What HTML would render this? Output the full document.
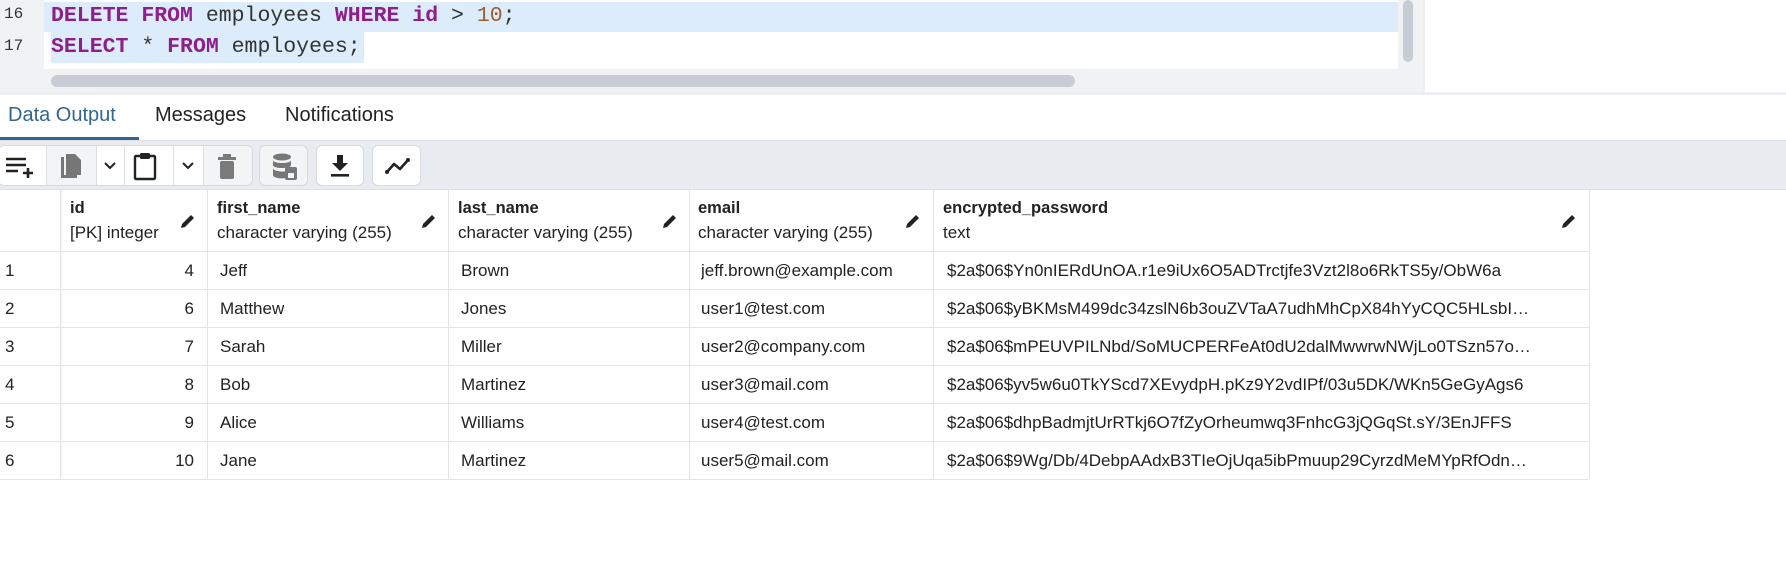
<!DOCTYPE html>
<html><head><meta charset="utf-8"><style>
*{margin:0;padding:0;box-sizing:border-box}
body{width:1786px;height:588px;background:#fff;font-family:"Liberation Sans",sans-serif;position:relative;overflow:hidden;color:#222}
.abs{position:absolute}
.code{font-family:"Liberation Mono",monospace;font-size:21.5px;color:#333;white-space:pre}
.kw{color:#8c1f8c;font-weight:bold}.num{color:#9a5f34}
.tab{position:absolute;top:104px;font-size:20px;color:#222}
.btn{position:absolute;top:145px;height:41px;border:1px solid #d6d9df;border-radius:6px;background:#fff}
.cell{position:absolute;font-size:17px;color:#222;white-space:nowrap;overflow:hidden}
.hl{position:absolute;background:#e1e4e9;height:1px}
.vl{position:absolute;background:#e1e4e9;width:1px}
</style></head><body>
<div class="abs" style="left:0;top:0;width:44px;height:92px;background:#f1f2f4"></div>
<div class="abs" style="left:4px;top:5px;font-family:'Liberation Mono',monospace;font-size:16px;color:#333">16</div>
<div class="abs" style="left:4px;top:37px;font-family:'Liberation Mono',monospace;font-size:16px;color:#333">17</div>
<div class="abs" style="left:44px;top:2px;width:1354px;height:30px;background:#dcecfa"></div>
<div class="abs" style="left:51px;top:32px;width:313px;height:31px;background:#dcecfa"></div>
<div class="abs code" style="left:51px;top:4px"><span class="kw">DELETE FROM</span> employees <span class="kw">WHERE id</span> &gt; <span class="num">10</span>;</div>
<div class="abs code" style="left:51px;top:35px"><span class="kw">SELECT</span> * <span class="kw">FROM</span> employees;</div>
<div class="abs" style="left:44px;top:69px;width:1354px;height:23px;background:#f1f2f4"></div>
<div class="abs" style="left:51px;top:75px;width:1024px;height:12px;border-radius:6px;background:#c8cdd5"></div>
<div class="abs" style="left:1398px;top:0;width:25px;height:92px;background:#f1f2f4"></div>
<div class="abs" style="left:1403px;top:0;width:10px;height:62px;border-radius:5px;background:#c8cdd5"></div>
<div class="abs" style="left:1423px;top:0;width:2px;height:92px;background:#eceef1"></div>
<div class="abs" style="left:0;top:92px;width:1786px;height:3px;background:#eceef1"></div>
<div class="tab" style="left:8px;color:#326690">Data Output</div>
<div class="tab" style="left:155px">Messages</div>
<div class="tab" style="left:285px">Notifications</div>
<div class="abs" style="left:0;top:137px;width:139px;height:3px;background:#326690"></div>
<div class="abs" style="left:0;top:140px;width:1786px;height:50px;background:#e8ebef;border-top:1px solid #dde0e5;border-bottom:1px solid #dde0e5"></div>
<div class="btn" style="left:-2px;width:255px;overflow:hidden">
 <div class="abs" style="left:47px;top:0;width:50px;height:41px;background:#f3f4f6"></div>
 <div class="abs" style="left:204px;top:0;width:51px;height:41px;background:#f3f4f6"></div>
 <div class="vl" style="left:47px;top:0;height:41px;background:#dcdfe4"></div>
 <div class="vl" style="left:97px;top:0;height:41px;background:#dcdfe4"></div>
 <div class="vl" style="left:125px;top:0;height:41px;background:#dcdfe4"></div>
 <div class="vl" style="left:174px;top:0;height:41px;background:#dcdfe4"></div>
 <div class="vl" style="left:204px;top:0;height:41px;background:#dcdfe4"></div>
 <svg class="abs" style="left:7px;top:9px" width="32" height="24" viewBox="0 0 32 24"><path d="M0 4h20M0 10h20M0 16h12M22 13v10M17 18h10" stroke="#222" stroke-width="2.6" fill="none"/></svg>
 <svg class="abs" style="left:59px;top:7px" width="26" height="28" viewBox="0 0 26 28"><path d="M3 4h3v18h13v3H3z" fill="#777"/><path d="M8 1h9l6 6v15H8z" fill="#777"/></svg>
 <svg class="abs" style="left:104px;top:15px" width="14" height="10" viewBox="0 0 14 10"><path d="M2 2l5 5 5-5" stroke="#222" stroke-width="2" fill="none"/></svg>
 <svg class="abs" style="left:134px;top:5px" width="24" height="30" viewBox="0 0 24 30"><rect x="2" y="5" width="20" height="23" rx="1" stroke="#222" stroke-width="2.4" fill="none"/><rect x="7" y="2" width="10" height="6" rx="1.5" fill="#222"/></svg>
 <svg class="abs" style="left:182px;top:15px" width="14" height="10" viewBox="0 0 14 10"><path d="M2 2l5 5 5-5" stroke="#222" stroke-width="2" fill="none"/></svg>
 <svg class="abs" style="left:218px;top:8px" width="20" height="26" viewBox="0 0 20 26"><rect x="1" y="3" width="18" height="3" fill="#7a7a7a"/><rect x="6" y="0" width="8" height="3" fill="#7a7a7a"/><rect x="3" y="7" width="14" height="18" rx="2" fill="#7a7a7a"/></svg>
</div>
<div class="btn" style="left:259px;width:49px;background:#f3f4f6">
 <svg class="abs" style="left:12px;top:7px" width="26" height="28" viewBox="0 0 26 28"><ellipse cx="10" cy="4" rx="9" ry="3.5" fill="#777"/><path d="M1 7c0 4 18 4 18 0v5c0 4-18 4-18 0z" fill="#777"/><path d="M1 15c0 4 13 4 13 3v7c-5 1-13 0-13-3z" fill="#777"/><rect x="13" y="14" width="12" height="13" rx="2" fill="#777"/><rect x="16" y="20" width="6" height="5" fill="#f3f4f6"/></svg>
</div>
<div class="btn" style="left:316px;width:48px">
 <svg class="abs" style="left:13px;top:8px" width="20" height="24" viewBox="0 0 20 24"><path d="M7 1h6v8h5l-8 8-8-8h5z" fill="#222"/><rect x="1" y="20" width="18" height="2.6" fill="#222"/></svg>
</div>
<div class="btn" style="left:372px;width:49px">
 <svg class="abs" style="left:11px;top:10px" width="26" height="20" viewBox="0 0 26 20"><path d="M3 16l7-8 6 5 8-9" stroke="#222" stroke-width="2.6" fill="none" stroke-linejoin="round"/><circle cx="3" cy="16" r="2" fill="#222"/><circle cx="24" cy="4" r="2" fill="#222"/></svg>
</div>
<div class="hl" style="left:0;top:251px;width:1589px"></div>
<div class="hl" style="left:0;top:289px;width:1589px"></div>
<div class="hl" style="left:0;top:327px;width:1589px"></div>
<div class="hl" style="left:0;top:365px;width:1589px"></div>
<div class="hl" style="left:0;top:403px;width:1589px"></div>
<div class="hl" style="left:0;top:441px;width:1589px"></div>
<div class="hl" style="left:0;top:479px;width:1589px"></div>
<div class="vl" style="left:60px;top:190px;height:289px;box-shadow:1px 0 2px #e8e8e8"></div>
<div class="vl" style="left:207px;top:190px;height:289px"></div>
<div class="vl" style="left:448px;top:190px;height:289px"></div>
<div class="vl" style="left:689px;top:190px;height:289px"></div>
<div class="vl" style="left:933px;top:190px;height:289px"></div>
<div class="vl" style="left:1589px;top:190px;height:289px"></div>

<div class="cell" style="left:70px;top:199px;font-weight:bold;font-size:16.5px">id</div>
<div class="cell" style="left:70px;top:223px">[PK] integer</div>
<div class="cell" style="left:217px;top:199px;font-weight:bold;font-size:16.5px">first_name</div>
<div class="cell" style="left:217px;top:223px">character varying (255)</div>
<div class="cell" style="left:458px;top:199px;font-weight:bold;font-size:16.5px">last_name</div>
<div class="cell" style="left:458px;top:223px">character varying (255)</div>
<div class="cell" style="left:698px;top:199px;font-weight:bold;font-size:16.5px">email</div>
<div class="cell" style="left:698px;top:223px">character varying (255)</div>
<div class="cell" style="left:943px;top:199px;font-weight:bold;font-size:16.5px">encrypted_password</div>
<div class="cell" style="left:943px;top:223px">text</div>

<svg class="abs" style="left:179px;top:212px" width="18" height="18" viewBox="0 0 18 18"><path d="M2 16l1-4 9-9 3 3-9 9z" fill="#222"/></svg>
<svg class="abs" style="left:420px;top:212px" width="18" height="18" viewBox="0 0 18 18"><path d="M2 16l1-4 9-9 3 3-9 9z" fill="#222"/></svg>
<svg class="abs" style="left:661px;top:212px" width="18" height="18" viewBox="0 0 18 18"><path d="M2 16l1-4 9-9 3 3-9 9z" fill="#222"/></svg>
<svg class="abs" style="left:904px;top:212px" width="18" height="18" viewBox="0 0 18 18"><path d="M2 16l1-4 9-9 3 3-9 9z" fill="#222"/></svg>
<svg class="abs" style="left:1560px;top:212px" width="18" height="18" viewBox="0 0 18 18"><path d="M2 16l1-4 9-9 3 3-9 9z" fill="#222"/></svg>

<div class="cell" style="left:5px;top:261px">1</div><div class="cell" style="left:150px;top:261px;width:44px;text-align:right">4</div><div class="cell" style="left:220px;top:261px">Jeff</div><div class="cell" style="left:461px;top:261px">Brown</div><div class="cell" style="left:701px;top:261px">jeff.brown@example.com</div><div class="cell" style="left:947px;top:261px;width:630px">$2a$06$Yn0nIERdUnOA.r1e9iUx6O5ADTrctjfe3Vzt2l8o6RkTS5y/ObW6a</div>
<div class="cell" style="left:5px;top:299px">2</div><div class="cell" style="left:150px;top:299px;width:44px;text-align:right">6</div><div class="cell" style="left:220px;top:299px">Matthew</div><div class="cell" style="left:461px;top:299px">Jones</div><div class="cell" style="left:701px;top:299px">user1@test.com</div><div class="cell" style="left:947px;top:299px;width:630px">$2a$06$yBKMsM499dc34zslN6b3ouZVTaA7udhMhCpX84hYyCQC5HLsbI…</div>
<div class="cell" style="left:5px;top:337px">3</div><div class="cell" style="left:150px;top:337px;width:44px;text-align:right">7</div><div class="cell" style="left:220px;top:337px">Sarah</div><div class="cell" style="left:461px;top:337px">Miller</div><div class="cell" style="left:701px;top:337px">user2@company.com</div><div class="cell" style="left:947px;top:337px;width:630px">$2a$06$mPEUVPILNbd/SoMUCPERFeAt0dU2dalMwwrwNWjLo0TSzn57o…</div>
<div class="cell" style="left:5px;top:375px">4</div><div class="cell" style="left:150px;top:375px;width:44px;text-align:right">8</div><div class="cell" style="left:220px;top:375px">Bob</div><div class="cell" style="left:461px;top:375px">Martinez</div><div class="cell" style="left:701px;top:375px">user3@mail.com</div><div class="cell" style="left:947px;top:375px;width:630px">$2a$06$yv5w6u0TkYScd7XEvydpH.pKz9Y2vdIPf/03u5DK/WKn5GeGyAgs6</div>
<div class="cell" style="left:5px;top:413px">5</div><div class="cell" style="left:150px;top:413px;width:44px;text-align:right">9</div><div class="cell" style="left:220px;top:413px">Alice</div><div class="cell" style="left:461px;top:413px">Williams</div><div class="cell" style="left:701px;top:413px">user4@test.com</div><div class="cell" style="left:947px;top:413px;width:630px">$2a$06$dhpBadmjtUrRTkj6O7fZyOrheumwq3FnhcG3jQGqSt.sY/3EnJFFS</div>
<div class="cell" style="left:5px;top:451px">6</div><div class="cell" style="left:150px;top:451px;width:44px;text-align:right">10</div><div class="cell" style="left:220px;top:451px">Jane</div><div class="cell" style="left:461px;top:451px">Martinez</div><div class="cell" style="left:701px;top:451px">user5@mail.com</div><div class="cell" style="left:947px;top:451px;width:630px">$2a$06$9Wg/Db/4DebpAAdxB3TIeOjUqa5ibPmuup29CyrzdMeMYpRfOdn…</div>
</body></html>
